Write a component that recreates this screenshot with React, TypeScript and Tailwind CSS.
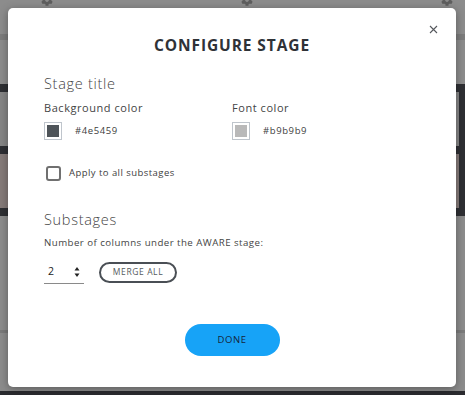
import React from "react";
import { FaCog } from "react-icons/fa";

const font = { fontFamily: '"Open Sans", "Noto Sans", sans-serif' };

function Swatch({ color, label }: { color: string; label: string }) {
  return (
    <div className="flex items-center">
      <div className="w-[18px] h-[18px] border border-[#bfc5cc] p-[2px] bg-white">
        <div className="w-full h-full" style={{ background: color }} />
      </div>
      <span className="ml-[13px] text-[9.5px] text-[#3d3d3d] tracking-[0.6px]">{label}</span>
    </div>
  );
}

export default function App() {
  return (
    <div className="relative w-[465px] h-[395px] overflow-hidden bg-[#8c8c8c]" style={font}>
      {/* background page */}
      <div className="flex flex-col w-full h-full">
        <div className="relative h-[34px]">
          <FaCog className="absolute left-[41px] top-[-6px] text-[#5e5e5e]" size={12} />
          <FaCog className="absolute left-[241px] top-[-6px] text-[#5e5e5e]" size={12} />
          <FaCog className="absolute left-[441px] top-[-6px] text-[#5e5e5e]" size={12} />
        </div>
        <div className="h-[6px] bg-[#7c7c7c]" />
        <div className="h-[44px]" />
        <div className="h-[132px] bg-[#2e2f33] flex flex-col py-[8px] pr-[6px] gap-[8px]">
          <div className="h-[54px] bg-[#858585]" />
          <div className="h-[54px] bg-[#857b79]" />
        </div>
        <div className="h-[114px]" />
        <div className="h-[3px] bg-[#7b7b7b]" />
        <div className="flex-1" />
        <div className="h-[4px] bg-[#2a2b2f]" />
      </div>

      {/* modal */}
      <div className="absolute left-[8px] top-[8px] w-[448px] h-[379px] bg-white rounded-[5px] shadow-[0_2px_8px_rgba(0,0,0,0.35)]">
        <button className="absolute right-[18px] top-[17px]">
          <svg width="9" height="9" viewBox="0 0 9 9">
            <path d="M1 1 L8 8 M8 1 L1 8" stroke="#55585d" strokeWidth="1.1" />
          </svg>
        </button>

        <div className="flex flex-col px-[36px]">
          <h2 className="mt-[27px] h-[20px] leading-[20px] text-center text-[15.5px] font-bold text-[#2f3237] tracking-[0.9px]">
            CONFIGURE STAGE
          </h2>

          <div className="mt-[19px] h-[20px] leading-[20px] text-[14.5px] font-light text-[#444] tracking-[0.7px]">Stage title</div>

          <div className="mt-[7px] grid grid-cols-[188px_1fr]">
            <div className="h-[14px] leading-[14px] text-[11px] text-[#444] tracking-[0.55px]">Background color</div>
            <div className="h-[14px] leading-[14px] text-[11px] text-[#444] tracking-[0.55px]">Font color</div>
            <div className="mt-[7px]">
              <Swatch color="#4e5459" label="#4e5459" />
            </div>
            <div className="mt-[7px]">
              <Swatch color="#b9b9b9" label="#b9b9b9" />
            </div>
          </div>

          <label className="mt-[26px] flex items-center">
            <span className="ml-[2px] w-[15px] h-[15px] rounded-[3px] border-2 border-[#707070] bg-white" />
            <span className="ml-[8px] text-[9.5px] text-[#3d3d3d] tracking-[0.45px]">Apply to all substages</span>
          </label>

          <div className="mt-[29px] h-[20px] leading-[20px] text-[14.5px] font-light text-[#444] tracking-[0.7px]">Substages</div>

          <div className="mt-[6px] h-[13px] leading-[13px] text-[9.7px] text-[#444] tracking-[0.45px]">
            Number of columns under the AWARE stage:
          </div>

          <div className="mt-[12px] flex items-center">
            <div className="w-[40px] h-[23px] border-b border-[#8a8a8a] flex items-center justify-between pl-[4px] pr-[4px]">
              <span className="text-[10.5px] text-[#222]">2</span>
              <svg width="6" height="12" viewBox="0 0 6 12">
                <path d="M3 1 L5.5 4.5 L0.5 4.5 Z" fill="#222" />
                <path d="M3 11 L5.5 7.5 L0.5 7.5 Z" fill="#222" />
              </svg>
            </div>
            <button className="ml-[15px] w-[78px] h-[21px] rounded-full border-2 border-[#4a4f55] text-[8.5px] font-medium text-[#555a60] tracking-[0.6px] flex items-center justify-center">
              MERGE ALL
            </button>
          </div>

          <div className="mt-[40px] flex justify-center">
            <button className="w-[95px] h-[32px] rounded-full bg-[#17a3f7] text-[9.5px] font-medium text-[#15263a] tracking-[0.6px]">
              DONE
            </button>
          </div>
        </div>
      </div>
    </div>
  );
}
